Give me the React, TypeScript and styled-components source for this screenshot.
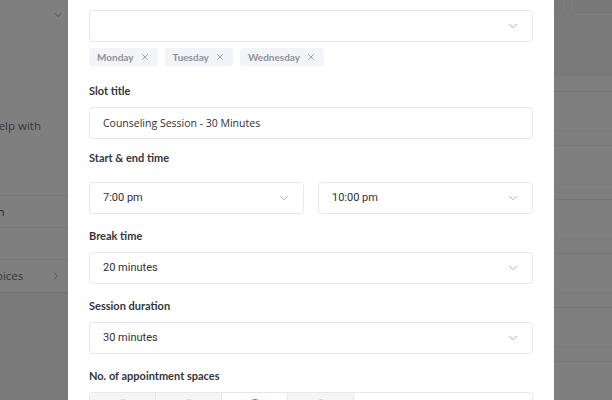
import { createGlobalStyle, styled } from "styled-components";
import { ChevronDown, ChevronRight, X } from "lucide-react";

const GlobalStyle = createGlobalStyle`
  body {
    margin: 0;
    overflow: hidden;
    font-family: "Open Sans", sans-serif;
  }
`;

const days = ["Monday", "Tuesday", "Wednesday"];
const spaces = [false, false, true, false];

export default function App() {
  return (
    <>
      <GlobalStyle />
      <Page>
        <Sidebar>
          <SideInner>
            <SideHeader>
              <ChevronDown size={12} strokeWidth={1.5} />
            </SideHeader>
            <SideText $indent={52}>Need help with</SideText>
            <SideRow $indent={66} $link>Learn</SideRow>
            <SideRow $indent={66} />
            <SideRow $indent={72}>
              Invoices
              <ChevronRight size={12} strokeWidth={1.5} />
            </SideRow>
          </SideInner>
        </Sidebar>
        <Main>
          <Toolbar>
            <ToolButton $width={40} />
            <ToolButton $width={60} />
          </Toolbar>
          <Table>
            {[0, 1, 2, 3, 4, 5].map((i) => (
              <TableRow key={i}>
                <RowHead />
                <RowBody />
              </TableRow>
            ))}
          </Table>
        </Main>
      </Page>

      <Overlay>
        <Modal>
          <Label>Select days</Label>
          <Select>
            <span />
            <ChevronDown size={14} strokeWidth={1.5} />
          </Select>
          <Chips>
            {days.map((d) => (
              <Chip key={d}>
                {d}
                <X size={10} strokeWidth={2} />
              </Chip>
            ))}
          </Chips>

          <Field $top={17.5}>
            <Label>Slot title</Label>
            <Input>Counseling Session - 30 Minutes</Input>
          </Field>

          <Field $top={12.5}>
            <Label $gap={16.5}>Start &amp; end time</Label>
            <TimeRow>
              <Select>
                7:00 pm
                <ChevronDown size={14} strokeWidth={1.5} />
              </Select>
              <Select>
                10:00 pm
                <ChevronDown size={14} strokeWidth={1.5} />
              </Select>
            </TimeRow>
          </Field>

          <Field>
            <Label>Break time</Label>
            <Select>
              20 minutes
              <ChevronDown size={14} strokeWidth={1.5} />
            </Select>
          </Field>

          <Field>
            <Label>Session duration</Label>
            <Select>
              30 minutes
              <ChevronDown size={14} strokeWidth={1.5} />
            </Select>
          </Field>

          <Field>
            <Label>No. of appointment spaces</Label>
            <Segments>
              {spaces.map((on, i) => (
                <Segment key={i} $active={on}>
                  <Radio $active={on} />
                </Segment>
              ))}
              <SegmentRest />
            </Segments>
          </Field>
        </Modal>
      </Overlay>
    </>
  );
}

const Page = styled.div`
  height: 400px;
  display: flex;
  background: #f3f3f3;
`;

const Sidebar = styled.div`
  width: 68px;
  height: 292px;
  flex-shrink: 0;
  overflow: hidden;
  background: #fff;
  box-shadow: 0 1px 0 #e6e6e6;
`;

const SideInner = styled.div`
  width: 160px;
  margin-left: -92px;
  display: flex;
  flex-direction: column;
`;

const SideHeader = styled.div`
  height: 30px;
  display: flex;
  justify-content: flex-end;
  align-items: center;
  padding-right: 4px;
  color: #777;
`;

const SideText = styled.div<{ $indent: number }>`
  height: 165px;
  box-sizing: border-box;
  padding: 88px 0 0 ${(p) => p.$indent}px;
  font-size: 11.5px;
  color: #6a6f78;
  white-space: nowrap;
`;

const SideRow = styled.div<{ $indent: number; $link?: boolean }>`
  height: 32px;
  box-sizing: border-box;
  border-top: 1px solid #ececec;
  display: flex;
  align-items: center;
  justify-content: space-between;
  padding: 0 6px 0 ${(p) => p.$indent}px;
  font-size: 11.5px;
  color: ${(p) => (p.$link ? "#23509a" : "#6a6f78")};
  white-space: nowrap;
  svg {
    color: #888;
  }
`;

const Main = styled.div`
  flex: 1;
  display: flex;
  flex-direction: column;
  overflow: hidden;
`;

const Toolbar = styled.div`
  height: 104px;
  display: flex;
  justify-content: flex-end;
  gap: 8px;
  margin-right: -20px;
`;

const ToolButton = styled.div<{ $width: number }>`
  width: ${(p) => p.$width}px;
  height: 30px;
  margin-top: -15px;
  box-sizing: border-box;
  border: 1px solid #fdfdfd;
  border-radius: 4px;
  background: #f0f0f0;
`;

const Table = styled.div`
  display: flex;
  flex-direction: column;
  background: #fff;
`;

const TableRow = styled.div`
  display: flex;
  flex-direction: column;
`;

const RowHead = styled.div`
  height: 14px;
  border-top: 1px solid #f6f6f6;
  background: #fdfdfd;
`;

const RowBody = styled.div`
  height: 38px;
  border-top: 1px solid #ededed;
`;

const Overlay = styled.div`
  position: fixed;
  inset: 0;
  background: rgba(0, 0, 0, 0.5);
`;

const Modal = styled.div`
  position: absolute;
  left: 68px;
  top: -34px;
  width: 486px;
  height: 470px;
  box-sizing: border-box;
  padding: 21px 21px 0;
  background: #fff;
  display: flex;
  flex-direction: column;
  font-family: Roboto, sans-serif;
`;

const Field = styled.div<{ $top?: number }>`
  display: flex;
  flex-direction: column;
  margin-top: ${(p) => p.$top ?? 15}px;
`;

const Label = styled.div<{ $gap?: number }>`
  font-family: Lato, sans-serif;
  font-size: 11px;
  font-weight: 700;
  line-height: 14px;
  color: #33363b;
  margin-bottom: ${(p) => p.$gap ?? 9}px;
`;

const Select = styled.div`
  height: 32px;
  flex-shrink: 0;
  box-sizing: border-box;
  border: 1px solid #e6e8eb;
  border-radius: 4px;
  display: flex;
  align-items: center;
  justify-content: space-between;
  padding: 0 12px 0 13px;
  font-size: 11px;
  color: #2f3136;
  svg {
    color: #9aa0a8;
  }
`;

const Input = styled(Select)`
  font-family: "Open Sans", sans-serif;
  font-size: 10.5px;
`;

const TimeRow = styled.div`
  display: flex;
  gap: 14px;
  & > * {
    flex: 1;
  }
`;

const Chips = styled.div`
  display: flex;
  gap: 7px;
  margin-top: 6px;
`;

const Chip = styled.div`
  height: 18px;
  display: flex;
  align-items: center;
  gap: 6px;
  padding: 0 8px;
  border-radius: 3px;
  background: #f2f4f7;
  font-family: Lato, sans-serif;
  font-size: 10px;
  font-weight: 700;
  color: #8d929b;
`;

const Segments = styled.div`
  height: 40px;
  display: flex;
  flex-shrink: 0;
  box-sizing: border-box;
  border: 1px solid #e6e8eb;
  border-radius: 4px;
  overflow: hidden;
`;

const Segment = styled.div<{ $active: boolean }>`
  width: 66px;
  flex-shrink: 0;
  display: flex;
  justify-content: center;
  padding-top: 6px;
  box-sizing: border-box;
  border-right: 1px solid #e6e8eb;
  background: ${(p) => (p.$active ? "#fff" : "#f4f5f7")};
`;

const SegmentRest = styled.div`
  flex: 1;
`;

const Radio = styled.div<{ $active: boolean }>`
  width: 12px;
  height: 12px;
  box-sizing: border-box;
  border-radius: 50%;
  border: 1.5px solid ${(p) => (p.$active ? "#22b45c" : "#d5d8dd")};
  background: ${(p) => (p.$active ? "#22b45c" : "#fff")};
`;
